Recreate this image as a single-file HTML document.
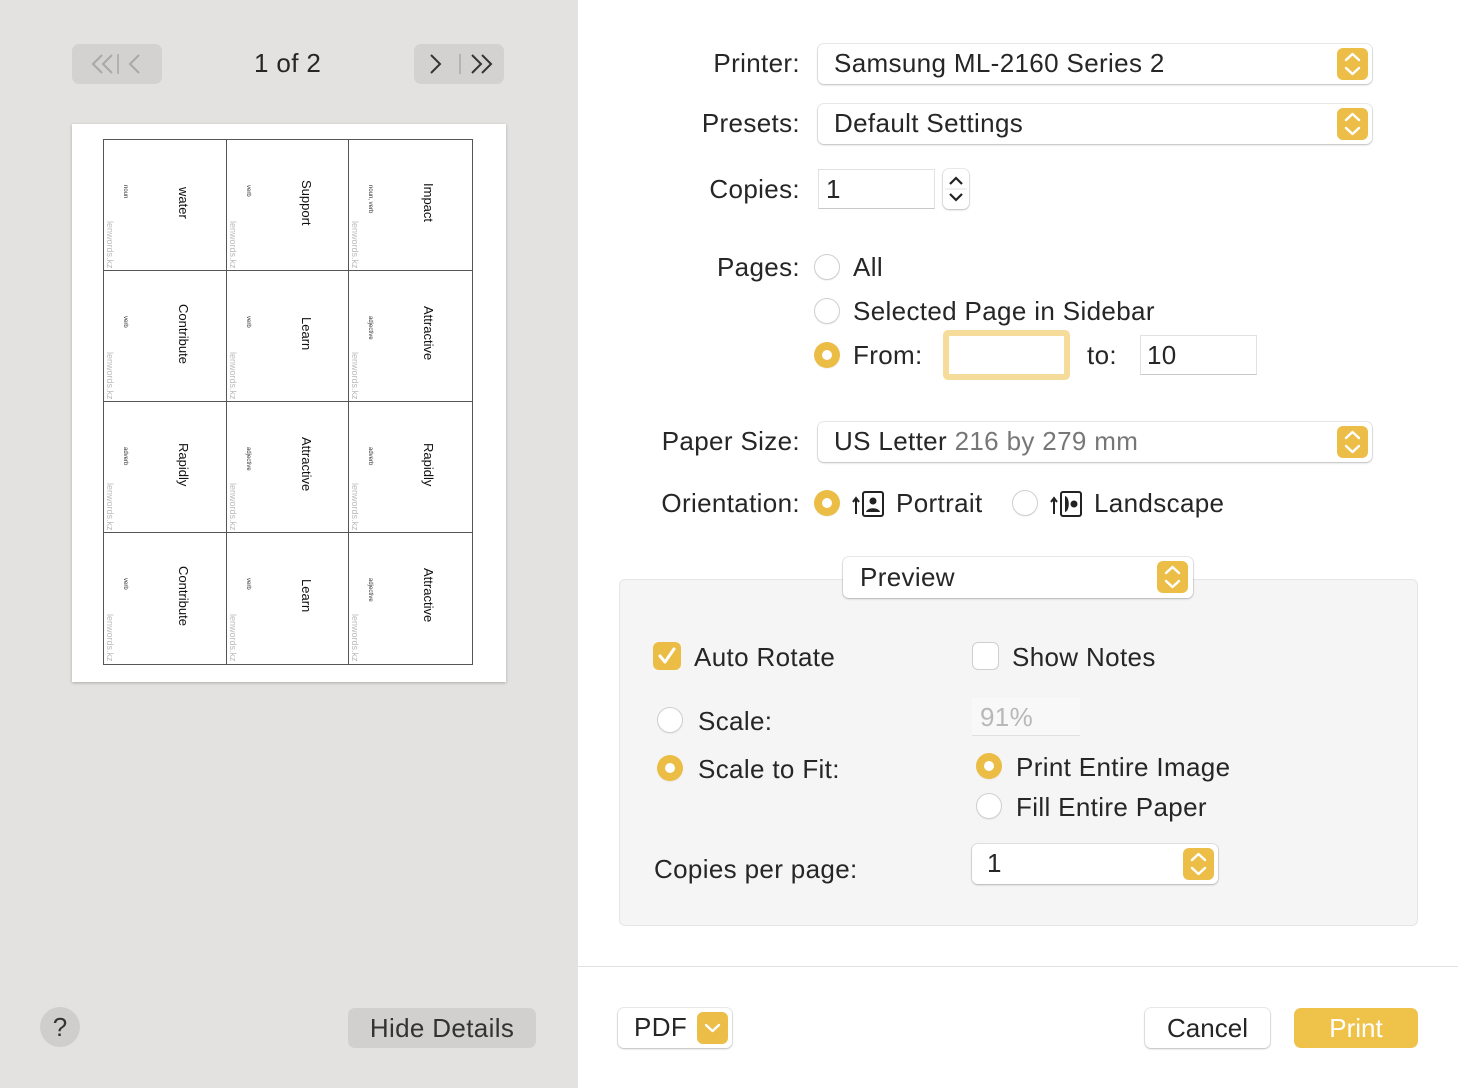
<!DOCTYPE html>
<html><head><meta charset="utf-8"><style>
*{box-sizing:border-box;margin:0;padding:0}
body{width:1458px;height:1088px;position:relative;overflow:hidden;font-family:"Liberation Sans",sans-serif;color:#222;background:#fff}
.a{position:absolute}
.t{position:absolute;font-size:26px;letter-spacing:0.35px;line-height:30px;white-space:nowrap;color:#262626}
.r{text-align:right;width:300px}
.pop{position:absolute;background:#fff;border-radius:6px;box-shadow:0 0 0 1px rgba(0,0,0,.08),0 1px 2px rgba(0,0,0,.2)}
.yb{position:absolute;background:#ecbe48;border-radius:6px}
.rad{position:absolute;width:26px;height:26px;border-radius:50%;border:1px solid #cfcfcf;background:#fff;box-shadow:0 1px 1px rgba(0,0,0,.05)}
.rad.on{border:none;background:#ebbd45}
.rad.on::after{content:"";position:absolute;left:8px;top:8px;width:10px;height:10px;border-radius:50%;background:#fff}
.fld{position:absolute;background:#fff;border:1px solid #e2e2e2;border-bottom-color:#c8c8c8}
.cell{position:absolute;width:122px;height:131px}
.mw{position:absolute;writing-mode:vertical-rl;font-size:13px;color:#111;left:71px;top:0;height:131px;text-align:center;line-height:16px;padding-bottom:6px}
.sw{position:absolute;writing-mode:vertical-rl;font-size:6px;color:#333;left:17px;top:45px;line-height:8px}
.lw{position:absolute;writing-mode:vertical-rl;font-size:9px;color:#bbb;left:1px;bottom:2px;line-height:10px}
</style></head><body>
<div class="a" style="left:0;top:0;width:578px;height:1088px;background:#e3e2e1"></div>
<div class="a" style="left:72px;top:44px;width:90px;height:40px;border-radius:7px;background:#d3d2d1"></div>
<svg class="a" style="left:72px;top:44px" width="90" height="40"><g fill="none" stroke="#a8a8a8" stroke-width="2"><path d="M30 11l-9 9 9 9M40 11l-9 9 9 9M67 11l-9 9 9 9"/><path d="M46 10v20" stroke-width="1.5"/></g></svg>
<div class="t" style="left:254px;top:48px">1 of 2</div>
<div class="a" style="left:414px;top:44px;width:90px;height:40px;border-radius:7px;background:#d3d2d1"></div>
<svg class="a" style="left:414px;top:44px" width="90" height="40"><g fill="none" stroke="#333" stroke-width="2"><path d="M17 11l9 9-9 9M58 11l9 9-9 9M68 11l9 9-9 9"/><path d="M46 10v20" stroke="#aaa" stroke-width="1.5"/></g></svg>
<div class="a" style="left:72px;top:124px;width:434px;height:558px;background:#fff;box-shadow:0 1px 3px rgba(0,0,0,.25)"></div>
<div class="a" style="left:103px;top:139px;width:370px;height:526px;border:1px solid #555"></div>
<div class="a" style="left:226px;top:139px;width:1px;height:526px;background:#555"></div>
<div class="a" style="left:348px;top:139px;width:1px;height:526px;background:#555"></div>
<div class="a" style="left:103px;top:270px;width:370px;height:1px;background:#555"></div>
<div class="a" style="left:103px;top:401px;width:370px;height:1px;background:#555"></div>
<div class="a" style="left:103px;top:532px;width:370px;height:1px;background:#555"></div>
<div class="cell" style="left:104px;top:140px"><div class="mw">water</div><div class="sw">noun</div><div class="lw">lenwords.kz</div></div>
<div class="cell" style="left:227px;top:140px"><div class="mw">Support</div><div class="sw">verb</div><div class="lw">lenwords.kz</div></div>
<div class="cell" style="left:349px;top:140px"><div class="mw">Impact</div><div class="sw">noun, verb</div><div class="lw">lenwords.kz</div></div>
<div class="cell" style="left:104px;top:271px"><div class="mw">Contribute</div><div class="sw">verb</div><div class="lw">lenwords.kz</div></div>
<div class="cell" style="left:227px;top:271px"><div class="mw">Learn</div><div class="sw">verb</div><div class="lw">lenwords.kz</div></div>
<div class="cell" style="left:349px;top:271px"><div class="mw">Attractive</div><div class="sw">adjective</div><div class="lw">lenwords.kz</div></div>
<div class="cell" style="left:104px;top:402px"><div class="mw">Rapidly</div><div class="sw">adverb</div><div class="lw">lenwords.kz</div></div>
<div class="cell" style="left:227px;top:402px"><div class="mw">Attractive</div><div class="sw">adjective</div><div class="lw">lenwords.kz</div></div>
<div class="cell" style="left:349px;top:402px"><div class="mw">Rapidly</div><div class="sw">adverb</div><div class="lw">lenwords.kz</div></div>
<div class="cell" style="left:104px;top:533px"><div class="mw">Contribute</div><div class="sw">verb</div><div class="lw">lenwords.kz</div></div>
<div class="cell" style="left:227px;top:533px"><div class="mw">Learn</div><div class="sw">verb</div><div class="lw">lenwords.kz</div></div>
<div class="cell" style="left:349px;top:533px"><div class="mw">Attractive</div><div class="sw">adjective</div><div class="lw">lenwords.kz</div></div>
<div class="a" style="left:40px;top:1007px;width:40px;height:40px;border-radius:50%;background:#cfcecd;font-size:26px;line-height:40px;text-align:center;color:#333">?</div>
<div class="a" style="left:348px;top:1008px;width:188px;height:40px;border-radius:7px;background:#d1d0cf;font-size:26px;letter-spacing:.35px;line-height:40px;text-align:center;color:#333">Hide Details</div>

<div class="t r" style="left:500px;top:48px">Printer:</div>
<div class="pop" style="left:818px;top:44px;width:554px;height:40px"></div>
<div class="t" style="left:834px;top:48px">Samsung ML-2160 Series 2</div>
<div class="t r" style="left:500px;top:108px">Presets:</div>
<div class="pop" style="left:818px;top:104px;width:554px;height:40px"></div>
<div class="t" style="left:834px;top:108px">Default Settings</div>
<div class="t r" style="left:500px;top:174px">Copies:</div>
<div class="fld" style="left:818px;top:169px;width:117px;height:40px"></div>
<div class="t" style="left:826px;top:174px">1</div>
<div class="pop" style="left:943px;top:169px;width:26px;height:40px"></div>
<svg class="a" style="left:943px;top:169px" width="26" height="40"><g fill="none" stroke="#222" stroke-width="2.2"><path d="M7 15l6-6 6 6M7 25l6 6 6-6"/></g><path d="M2 20h22" stroke="#e5e5e5"/></svg>
<div class="t r" style="left:500px;top:252px">Pages:</div>
<div class="rad" style="left:814px;top:254px"></div><div class="t" style="left:853px;top:252px">All</div>
<div class="rad" style="left:814px;top:298px"></div><div class="t" style="left:853px;top:296px">Selected Page in Sidebar</div>
<div class="rad on" style="left:814px;top:342px"></div><div class="t" style="left:853px;top:340px">From:</div>
<div class="a" style="left:943px;top:330px;width:127px;height:50px;border-radius:5px;background:#f6dc9b"></div>
<div class="a" style="left:949px;top:336px;width:115px;height:38px;background:#fff"></div>
<div class="t" style="left:1087px;top:340px">to:</div>
<div class="fld" style="left:1140px;top:335px;width:117px;height:40px"></div>
<div class="t" style="left:1147px;top:340px">10</div>
<div class="t r" style="left:500px;top:426px">Paper Size:</div>
<div class="pop" style="left:818px;top:422px;width:554px;height:40px"></div>
<div class="t" style="left:834px;top:426px">US Letter <span style="color:#777">216 by 279 mm</span></div>
<div class="t r" style="left:500px;top:488px">Orientation:</div>
<div class="rad on" style="left:814px;top:490px"></div>
<svg class="a" style="left:851px;top:490px" width="34" height="28"><path d="M5 24V9M2 12l3-4 3 4" stroke="#222" stroke-width="2" fill="none"/><rect x="12" y="2" width="20" height="24" rx="2" fill="none" stroke="#222" stroke-width="2"/><circle cx="22" cy="11" r="3.5" fill="#222"/><path d="M15 22c1-5 13-5 14 0z" fill="#222"/></svg>
<div class="t" style="left:896px;top:488px">Portrait</div>
<div class="rad" style="left:1012px;top:490px"></div>
<svg class="a" style="left:1049px;top:490px" width="34" height="28"><path d="M5 24V9M2 12l3-4 3 4" stroke="#222" stroke-width="2" fill="none"/><rect x="12" y="2" width="20" height="24" rx="2" fill="none" stroke="#222" stroke-width="2"/><circle cx="25" cy="14" r="3.5" fill="#222"/><path d="M16 6c5 1 5 15 0 16z" fill="#222"/></svg>
<div class="t" style="left:1094px;top:488px">Landscape</div>

<div class="a" style="left:619px;top:579px;width:799px;height:347px;background:#f5f5f5;border:1px solid #e6e6e6;border-radius:6px"></div>
<div class="pop" style="left:843px;top:557px;width:350px;height:41px"></div>
<div class="t" style="left:860px;top:562px">Preview</div>
<div class="a" style="left:653px;top:642px;width:28px;height:28px;border-radius:6px;background:#ebbd45"></div>
<svg class="a" style="left:653px;top:642px" width="28" height="28"><path d="M7 14l5 6 9-13" fill="none" stroke="#fff" stroke-width="3" stroke-linecap="round" stroke-linejoin="round"/></svg>
<div class="t" style="left:694px;top:642px">Auto Rotate</div>
<div class="a" style="left:972px;top:642px;width:27px;height:28px;border-radius:6px;border:1px solid #cfcfcf;background:#fff"></div>
<div class="t" style="left:1012px;top:642px">Show Notes</div>
<div class="rad" style="left:657px;top:707px"></div><div class="t" style="left:698px;top:706px">Scale:</div>
<div class="a" style="left:972px;top:698px;width:108px;height:38px;background:#f8f8f8;border-bottom:1px solid #e0e0e0"></div>
<div class="t" style="left:980px;top:702px;color:#b8b8b8">91%</div>
<div class="rad on" style="left:657px;top:755px"></div><div class="t" style="left:698px;top:754px">Scale to Fit:</div>
<div class="rad on" style="left:976px;top:753px"></div><div class="t" style="left:1016px;top:752px">Print Entire Image</div>
<div class="rad" style="left:976px;top:793px"></div><div class="t" style="left:1016px;top:792px">Fill Entire Paper</div>
<div class="t" style="left:654px;top:854px">Copies per page:</div>
<div class="pop" style="left:972px;top:844px;width:246px;height:40px"></div>
<div class="t" style="left:987px;top:848px">1</div>

<div class="yb" style="left:1337px;top:48px;width:31px;height:32px"></div>
<div class="yb" style="left:1337px;top:108px;width:31px;height:32px"></div>
<div class="yb" style="left:1337px;top:426px;width:31px;height:32px"></div>
<div class="yb" style="left:1157px;top:561px;width:31px;height:32px"></div>
<div class="yb" style="left:1183px;top:848px;width:31px;height:32px"></div>
<svg class="a" style="left:0;top:0" width="1458" height="1088"><g fill="none" stroke="#fff" stroke-width="2.4" stroke-linecap="round" stroke-linejoin="round">
<path d="M1346 60l6.5-6 6.5 6M1346 68l6.5 6 6.5-6"/>
<path d="M1346 120l6.5-6 6.5 6M1346 128l6.5 6 6.5-6"/>
<path d="M1346 438l6.5-6 6.5 6M1346 446l6.5 6 6.5-6"/>
<path d="M1166 573l6.5-6 6.5 6M1166 581l6.5 6 6.5-6"/>
<path d="M1192 860l6.5-6 6.5 6M1192 868l6.5 6 6.5-6"/>
<path d="M706 1023l6 6 6-6"/></g></svg>

<div class="a" style="left:578px;top:966px;width:880px;height:1px;background:#e2e2e2"></div>
<div class="pop" style="left:618px;top:1008px;width:114px;height:40px"></div>
<div class="t" style="left:634px;top:1012px">PDF</div>
<div class="yb" style="left:697px;top:1012px;width:31px;height:32px"></div>
<svg class="a" style="left:697px;top:1012px" width="31" height="32"><path d="M9 13l6.5 6 6.5-6" fill="none" stroke="#fff" stroke-width="2.4" stroke-linecap="round" stroke-linejoin="round"/></svg>
<div class="pop" style="left:1145px;top:1008px;width:125px;height:40px;font-size:26px;line-height:40px;text-align:center;color:#262626">Cancel</div>
<div class="a" style="left:1294px;top:1008px;width:124px;height:40px;border-radius:7px;background:#efc24a;font-size:26px;line-height:40px;text-align:center;color:#fff">Print</div>
</body></html>
